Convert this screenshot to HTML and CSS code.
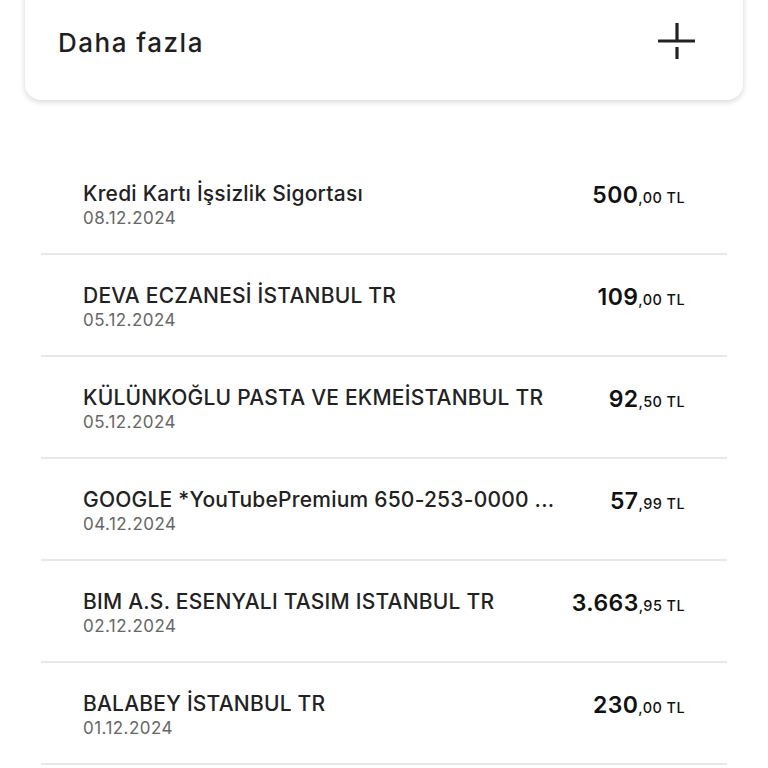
FILE: index.html
```html
<!DOCTYPE html>
<html lang="tr">
<head>
<meta charset="utf-8">
<link rel="stylesheet" href="styles.css">
</head>
<body>
<div class="page">
  <div class="card">
    <span class="card-title">Daha fazla</span>
    <svg class="plus" width="40" height="40" viewBox="0 0 40 40" aria-hidden="true">
      <path d="M1 18 H38 M20 0 V18 M20 24 V36" stroke="#222" stroke-width="3.2" fill="none"/>
    </svg>
  </div>
  <ul class="list">
    <li class="row">
      <div class="info"><div class="name">Kredi Kartı İşsizlik Sigortası</div><div class="date">08.12.2024</div></div>
      <div class="amount"><span class="int">500</span><span class="dec">,00 TL</span></div>
    </li>
    <li class="row">
      <div class="info"><div class="name">DEVA ECZANESİ İSTANBUL TR</div><div class="date">05.12.2024</div></div>
      <div class="amount"><span class="int">109</span><span class="dec">,00 TL</span></div>
    </li>
    <li class="row">
      <div class="info"><div class="name">KÜLÜNKOĞLU PASTA VE EKMEİSTANBUL TR</div><div class="date">05.12.2024</div></div>
      <div class="amount"><span class="int">92</span><span class="dec">,50 TL</span></div>
    </li>
    <li class="row">
      <div class="info"><div class="name">GOOGLE *YouTubePremium 650-253-0000 ...</div><div class="date">04.12.2024</div></div>
      <div class="amount"><span class="int">57</span><span class="dec">,99 TL</span></div>
    </li>
    <li class="row">
      <div class="info"><div class="name">BIM A.S. ESENYALI TASIM ISTANBUL TR</div><div class="date">02.12.2024</div></div>
      <div class="amount"><span class="int">3.663</span><span class="dec">,95 TL</span></div>
    </li>
    <li class="row">
      <div class="info"><div class="name">BALABEY İSTANBUL TR</div><div class="date">01.12.2024</div></div>
      <div class="amount"><span class="int">230</span><span class="dec">,00 TL</span></div>
    </li>
  </ul>
</div>
</body>
</html>
```
FILE: styles.css
```css
html, body {
  margin: 0;
  padding: 0;
  background: #ffffff;
}
body {
  font-family: Inter, "Noto Sans", sans-serif;
  color: #222222;
  overflow: hidden;
  height: 768px;
}
.page {
  width: 768px;
}
.card {
  margin: -40px 25px 0 25px;
  height: 140px;
  box-sizing: border-box;
  padding: 24px 46px 0 33px;
  background: #fff;
  border-radius: 0 0 16px 16px;
  box-shadow: 0 2px 6px rgba(0,0,0,0.16);
  display: flex;
  align-items: center;
  justify-content: space-between;
}
.card-title {
  font-size: 26px;
  font-weight: 500;
  color: #1f1f1f;
  letter-spacing: 1.5px;
}
.plus {
  display: block;
  margin-top: 2px;
}
.list {
  list-style: none;
  margin: 53px 41px 0 41px;
  padding: 0;
}
.row {
  height: 100px;
  border-bottom: 2px solid #e8e8e8;
  box-sizing: content-box;
  display: flex;
  justify-content: space-between;
  align-items: flex-start;
  padding: 0 42px;
}
.info {
  padding-top: 27px;
}
.name {
  font-size: 21px;
  font-weight: 500;
  line-height: 27px;
  letter-spacing: 0.22px;
  color: #222;
}
.date {
  font-size: 17px;
  line-height: 22px;
  letter-spacing: 0.45px;
  color: #666;
}
.amount {
  padding-top: 28px;
  white-space: nowrap;
  color: #111;
}
.int {
  font-size: 23px;
  font-weight: 600;
  letter-spacing: 0.4px;
}
.dec {
  font-size: 14.5px;
  font-weight: 500;
  letter-spacing: 0.4px;
}
```
